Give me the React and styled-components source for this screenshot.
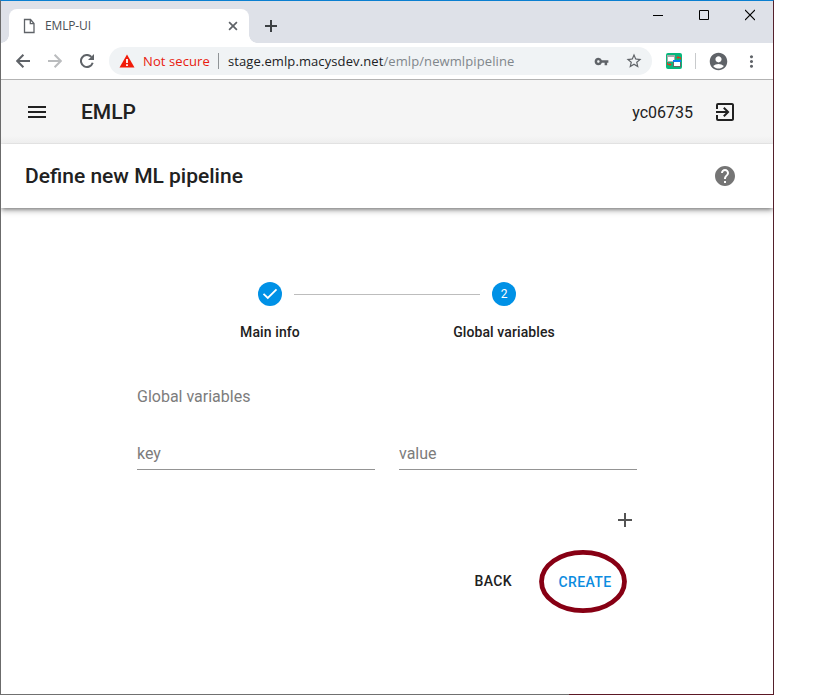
import React from "react";
import styled, { createGlobalStyle } from "styled-components";
import {
  MdMenu, MdExitToApp, MdHelp,
  MdVpnKey, MdStarBorder, MdAccountCircle, MdMoreVert, MdAdd,
} from "react-icons/md";

const Global = createGlobalStyle`
  * { box-sizing: border-box; }
  body { margin: 0; background: #fff; font-family: Roboto, "Liberation Sans", sans-serif; }
  button { font: inherit; border: 0; padding: 0; background: none; color: inherit; }
`;

const Window = styled.div`
  position: relative;
  width: 774px;
  height: 695px;
  display: flex;
  flex-direction: column;
  border-style: solid;
  border-width: 1px;
  border-color: #0a7fd0 #54202b #707070 #6b6b6b;
  background: #fff;
`;

const BottomEdge = styled.div`
  position: absolute;
  right: -1px;
  bottom: -1px;
  width: 205px;
  height: 1px;
  background: #5c1825;
`;

const TabStrip = styled.div`
  display: flex;
  height: 42px;
  padding: 8px 0 0 8px;
  background: #dee1e8;
`;

const Tab = styled.div`
  position: relative;
  display: flex;
  align-items: center;
  width: 240px;
  height: 34px;
  padding: 0 10px 0 14px;
  border-radius: 8px 8px 0 0;
  background: #fff;
  &::before, &::after {
    content: "";
    position: absolute;
    bottom: 0;
    width: 8px;
    height: 8px;
  }
  &::before { left: -8px; background: radial-gradient(circle at 0 0, transparent 7.5px, #fff 8px); }
  &::after { right: -8px; background: radial-gradient(circle at 100% 0, transparent 7.5px, #fff 8px); }
`;

const TabTitle = styled.span`
  flex: 1;
  margin-left: 10px;
  font: 12px/16px "Open Sans", sans-serif;
  letter-spacing: -0.15px;
  color: #4b4f54;
`;

const NewTab = styled.button`
  display: flex;
  align-items: center;
  height: 34px;
  margin-left: 16px;
`;

const Caption = styled.div`
  display: flex;
  gap: 36px;
  margin: 0 18px 0 auto;
  svg { display: block; }
`;

const Toolbar = styled.div`
  display: flex;
  align-items: center;
  height: 37px;
  padding-left: 12px;
  border-bottom: 1px solid #b3b3b3;
  color: #5f6368;
  svg { display: block; flex: none; }
`;

const NavButton = styled.button`
  display: flex;
  justify-content: center;
  width: 20px;
  margin-right: 12px;
  color: ${(p) => (p.$disabled ? "#babcbe" : "#5f6368")};
`;

const NavIcon = styled.svg.attrs({ width: 14, height: 14, viewBox: "0 0 14 14" })`
  fill: none;
  stroke: currentColor;
  stroke-width: 2;
`;

const Omnibox = styled.div`
  display: flex;
  align-items: center;
  width: 543px;
  height: 28px;
  padding: 0 9px 0 10px;
  border-radius: 14px;
  background: #f0f3f5;
  font: 13px/18px "Open Sans", sans-serif;
`;

const Warning = styled.span`
  width: 75px;
  padding-left: 8px;
  white-space: nowrap;
  letter-spacing: 0.1px;
  color: #e8200f;
`;

const Rule = styled.i`
  width: 1px;
  height: 16px;
  background: ${(p) => p.$color || "#909497"};
`;

const OmniRule = styled(Rule)`
  margin-left: 8px;
`;

const Url = styled.span`
  flex: 1;
  margin-left: 9px;
  white-space: nowrap;
  letter-spacing: 0.1px;
  color: #202124;
  em { font-style: normal; color: #80868b; }
`;

const StarIcon = styled(MdStarBorder)`
  margin-left: 16px;
`;

const Actions = styled.div`
  display: flex;
  align-items: center;
  flex: 1;
  padding: 0 12px 0 14px;
  justify-content: space-between;
`;

const AppBar = styled.header`
  display: flex;
  align-items: center;
  height: 64px;
  padding: 0 36px 0 24px;
  background: linear-gradient(#f5f5f5 56px, #ededed);
  color: #212121;
  svg { display: block; }
`;

const Brand = styled.h1`
  flex: 1;
  margin: 0 0 0 32px;
  font-size: 21px;
  line-height: 24px;
  font-weight: 500;
`;

const User = styled.span`
  margin: 2px 20px 0 0;
  font-size: 16px;
  line-height: 24px;
`;

const TitleBar = styled(AppBar)`
  position: relative;
  justify-content: space-between;
  background: #fff;
  box-shadow: 0 2px 4px -1px rgba(0, 0, 0, .4), 0 3px 6px rgba(0, 0, 0, .24);
  clip-path: inset(-1px 0 -14px 0);
  svg { color: #757575; }
`;

const Title = styled(Brand)`
  margin: 0;
`;

const Main = styled.main`
  width: 500px;
  margin: 0 auto;
  padding-top: 74px;
`;

const Stepper = styled.div`
  display: grid;
  grid-template-columns: 234px 234px;
  justify-content: center;
`;

const Step = styled.div`
  display: grid;
  grid-template-columns: 1fr 24px 1fr;
  align-items: center;
  gap: 16px 12px;
`;

const Dot = styled.span`
  grid-column: 2;
  display: flex;
  align-items: center;
  justify-content: center;
  width: 24px;
  height: 24px;
  border-radius: 50%;
  background: #0091e6;
  color: #fff;
  font-size: 12px;
`;

const Connector = styled.i`
  height: 1px;
  margin-top: 1px;
  background: #bdbdbd;
  grid-column: ${(p) => p.$col};
  grid-row: 1;
`;

const StepLabel = styled.span`
  grid-column: 1 / -1;
  text-align: center;
  font-size: 14px;
  line-height: 20px;
  font-weight: 500;
  letter-spacing: 0.1px;
  color: #212121;
`;

const Subhead = styled.h2`
  margin: 43px 0 0;
  font-size: 16px;
  line-height: 24px;
  font-weight: 400;
  color: #7c7c7c;
`;

const Fields = styled.div`
  display: grid;
  grid-template-columns: 1fr 1fr;
  gap: 24px;
  margin-top: 28px;
`;

const Field = styled.input`
  width: 100%;
  height: 33px;
  padding: 0;
  border: 0;
  border-bottom: 1px solid #949494;
  border-radius: 0;
  background: transparent;
  font: 16px/24px Roboto, sans-serif;
  &::placeholder { color: #7c7c7c; opacity: 1; }
`;

const AddRow = styled.div`
  display: flex;
  justify-content: flex-end;
  margin-top: 38px;
  color: #545454;
`;

const Buttons = styled.div`
  display: flex;
  justify-content: flex-end;
  align-items: center;
  height: 64px;
  margin: 17px 10px 0 0;
`;

const TextButton = styled.button`
  font-size: 14px;
  line-height: 20px;
  font-weight: 500;
  letter-spacing: 0.4px;
  color: ${(p) => (p.$primary ? "#0c8ce0" : "#212121")};
`;

const Highlighted = styled.div`
  position: relative;
  display: flex;
  align-items: center;
  justify-content: center;
  width: 88px;
  height: 64px;
  margin-left: 27px;
  padding: 2px 0 0 4px;
  svg { position: absolute; inset: 0; pointer-events: none; overflow: visible; }
`;

export default function App() {
  return (
    <>
      <Global />
      <Window>
        <TabStrip>
          <Tab>
            <svg width="12" height="16" viewBox="0 0 12 16" fill="none" stroke="#5f6368" strokeWidth="1.3">
              <path d="M1.5 1.5h6l3.5 4v9H1.5zM7.3 1.5v4.2H11" />
            </svg>
            <TabTitle>EMLP-UI</TabTitle>
            <svg width="12" height="12" viewBox="0 0 12 12" stroke="#5f6368" strokeWidth="1.7">
              <path d="M2.1 2.1l7.8 7.8M9.9 2.1L2.1 9.9" />
            </svg>
          </Tab>
          <NewTab>
            <svg width="12" height="12" viewBox="0 0 12 12" stroke="#3c4043" strokeWidth="2">
              <path d="M6 0v12M0 6h12" />
            </svg>
          </NewTab>
          <Caption>
            <svg width="10" height="12" stroke="#000"><path d="M0 6.5h10" /></svg>
            <svg width="10" height="12" stroke="#000" fill="none"><path d="M.5 1.5h9v9h-9z" /></svg>
            <svg width="10" height="12" stroke="#000" strokeWidth="1.1"><path d="M0 1l10 10M10 1L0 11" /></svg>
          </Caption>
        </TabStrip>
        <Toolbar>
          <NavButton><NavIcon><path d="M14 7H1.5M7.4.7L1.2 7l6.200 6.300" /></NavIcon></NavButton>
          <NavButton $disabled><NavIcon><path d="M0 7h12.5M6.600.7L12.800 7l-6.200 6.300" /></NavIcon></NavButton>
          <NavButton>
            <NavIcon>
              <path d="M12.700 8.700A6 6 0 1 1 11.400 2.900" />
              <path d="M14 0v6H8z" fill="currentColor" stroke="none" />
            </NavIcon>
          </NavButton>
          <Omnibox>
            <svg width="16" height="14" viewBox="0 0 16 14">
              <path d="M8 .5L15.5 13.5H.5z" fill="#f11b09" />
              <path d="M7.1 5h1.8v4H7.1zM7.1 10.2h1.8V12H7.1z" fill="#fff" />
            </svg>
            <Warning>Not secure</Warning>
            <OmniRule />
            <Url>stage.emlp.macysdev.net<em>/emlp/newmlpipeline</em></Url>
            <MdVpnKey size={15} />
            <StarIcon size={18} />
          </Omnibox>
          <Actions>
            <svg width="16" height="16" viewBox="0 0 16 16">
              <rect width="16" height="16" rx="2" fill="#08b77d" />
              <rect x="1" y="2" width="8" height="7" fill="#aaa" />
              <rect x="2" y="4" width="6" height="4" fill="#fff" />
              <rect x="7" y="7" width="8" height="7" fill="#666" />
              <rect x="7" y="7" width="8" height="2" fill="#087cf0" />
              <rect x="8" y="9" width="6" height="4" fill="#fff" />
              <path d="M14.5 6.5v-2H11M12.5 3L11 4.5 12.5 6M1.5 9.5v2H5M3.5 10L5 11.5 3.5 13" fill="none" stroke="#e3341c" />
            </svg>
            <Rule $color="#c8cacc" />
            <MdAccountCircle size={21} />
            <MdMoreVert size={19} />
          </Actions>
        </Toolbar>
        <AppBar>
          <MdMenu size={24} />
          <Brand>EMLP</Brand>
          <User>yc06735</User>
          <MdExitToApp size={24} />
        </AppBar>
        <TitleBar as="div">
          <Title as="h2">Define new ML pipeline</Title>
          <MdHelp size={24} />
        </TitleBar>
        <Main>
          <Stepper>
            <Step>
              <Dot>
                <svg width="18" height="18" viewBox="0 0 18 18" fill="none" stroke="#fff" strokeWidth="1.8">
                  <path d="M2.5 8.8L6.8 13 15.5 4.3" />
                </svg>
              </Dot>
              <Connector $col={3} />
              <StepLabel>Main info</StepLabel>
            </Step>
            <Step>
              <Connector $col={1} />
              <Dot>2</Dot>
              <StepLabel>Global variables</StepLabel>
            </Step>
          </Stepper>
          <Subhead>Global variables</Subhead>
          <Fields>
            <Field placeholder="key" />
            <Field placeholder="value" />
          </Fields>
          <AddRow><MdAdd size={24} /></AddRow>
          <Buttons>
            <TextButton>BACK</TextButton>
            <Highlighted>
              <TextButton $primary>CREATE</TextButton>
              <svg width="88" height="64" fill="none" stroke="#870014" strokeWidth="4.8">
                <ellipse cx="44" cy="32.5" rx="41.5" ry="29.2" />
              </svg>
            </Highlighted>
          </Buttons>
        </Main>
        <BottomEdge />
      </Window>
    </>
  );
}
